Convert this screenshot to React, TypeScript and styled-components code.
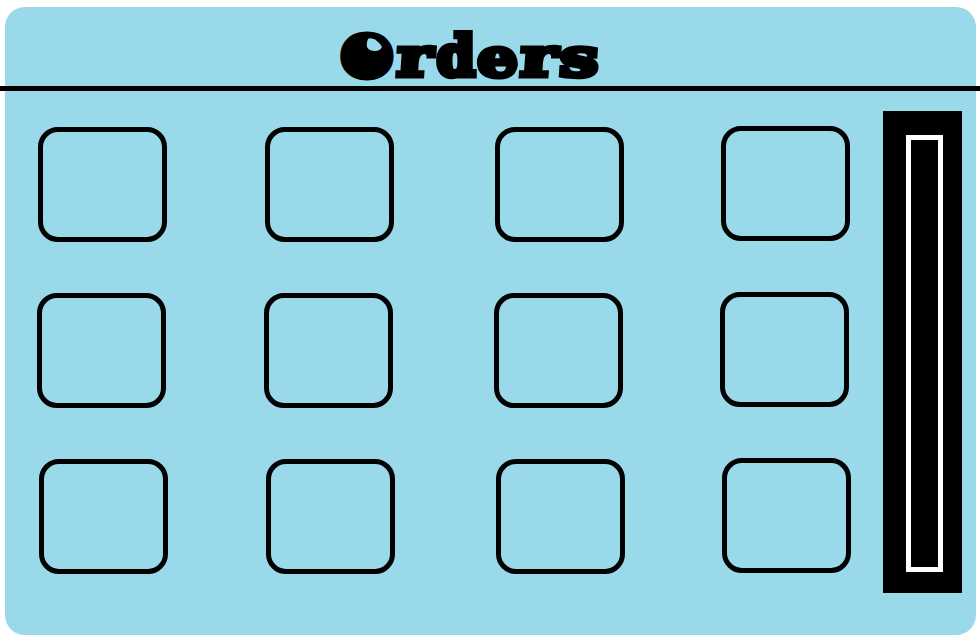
import React from "react";
import styled, { createGlobalStyle } from "styled-components";

const GlobalStyle = createGlobalStyle`
  body { margin: 0; background: #fff; overflow: hidden; }
  * { box-sizing: border-box; }
`;

const Page = styled.main`
  width: 980px;
  height: 644px;
  padding: 7px 4px 9px 5px;
  background: #fff;
`;

const Panel = styled.section`
  width: 971px;
  height: 628px;
  border-radius: 20px;
  background: #99d9ea;
`;

const Header = styled.header`
  height: 84px;
  margin: 0 -4px 0 -5px;
  padding-left: 340px;
  border-bottom: 5px solid #000;
`;

const Title = styled.h1`
  position: relative;
  display: flex;
  align-items: baseline;
  margin: 0;
  padding-top: 10px;
  font: 700 58px/74px "DejaVu Serif", serif;
  color: #000;
`;

const Letter = styled.span<{
  $width: number;
  $stretch: number;
  $stroke: number;
  $size: number;
  $drop: number;
  $skew: number;
}>`
  width: ${(p) => p.$width}px;
  font-size: ${(p) => p.$size}px;
  line-height: 74px;
  display: flex;
  justify-content: center;
  transform: translateY(${(p) => p.$drop}px) scaleX(${(p) => p.$stretch}) skewX(${(p) => p.$skew}deg);
  -webkit-text-stroke: ${(p) => p.$stroke}px #000;
`;

const Highlight = styled.svg`
  position: absolute;
  left: 26px;
  top: 31px;
  width: 17px;
  height: 15px;
`;

const Body = styled.div`
  display: flex;
`;

const Orders = styled.div`
  width: 878px;
  padding-top: 36px;
  display: flex;
  flex-direction: column;
  gap: 51px;
`;

const Row = styled.div<{ $indent: number }>`
  display: grid;
  grid-template-columns: 129px 129px 129px 129px;
  column-gap: 98px;
  padding-left: ${(p) => p.$indent}px;
`;

const Slot = styled.div<{ $column: number }>`
  width: 129px;
  height: 115px;
  border: 5px solid #000;
  border-radius: 20px;
  margin-left: ${(p) => [0, 0, 3, 2][p.$column]}px;
  margin-top: ${(p) => (p.$column === 3 ? -1 : 0)}px;
`;

const ScrollTrack = styled.div`
  width: 79px;
  height: 482px;
  margin-top: 20px;
  padding: 24px 19px 21px 23px;
  background: #000;
`;

const ScrollThumb = styled.div`
  height: 437px;
  border: 5px solid #fff;
`;

const letters = [
  { char: "O", width: 54, stretch: 1.06, stroke: 18, size: 41, drop: -3, skew: 0 },
  { char: "r", width: 42, stretch: 1.24, stroke: 5, size: 54, drop: 2, skew: -3 },
  { char: "d", width: 40, stretch: 0.98, stroke: 6, size: 56, drop: 2, skew: 0 },
  { char: "e", width: 43, stretch: 1.2, stroke: 5, size: 53, drop: 2, skew: 0 },
  { char: "r", width: 40, stretch: 1.28, stroke: 5, size: 54, drop: 2, skew: -3 },
  { char: "s", width: 41, stretch: 1.3, stroke: 5, size: 53, drop: 2, skew: -3 },
];

const rowIndents = [33, 32, 34];
const columns = [0, 1, 2, 3];

export default function App() {
  return (
    <>
      <GlobalStyle />
      <Page>
        <Panel>
          <Header>
            <Title>
              {letters.map((l, i) => (
                <Letter
                  key={i}
                  $width={l.width}
                  $stretch={l.stretch}
                  $stroke={l.stroke}
                  $size={l.size}
                  $drop={l.drop}
                  $skew={l.skew}
                >
                  {l.char}
                </Letter>
              ))}
              <Highlight viewBox="0 0 17 15" aria-hidden="true">
                <path d="M2 1 Q0 5 1 9 Q3 13 9 13 Q14 13 16 9 Q12 2 6 0.5 Q3 0 2 1Z" fill="#99d9ea" />
              </Highlight>
            </Title>
          </Header>
          <Body>
            <Orders>
              {rowIndents.map((indent) => (
                <Row key={indent} $indent={indent}>
                  {columns.map((column) => (
                    <Slot key={column} $column={column} />
                  ))}
                </Row>
              ))}
            </Orders>
            <ScrollTrack>
              <ScrollThumb />
            </ScrollTrack>
          </Body>
        </Panel>
      </Page>
    </>
  );
}
